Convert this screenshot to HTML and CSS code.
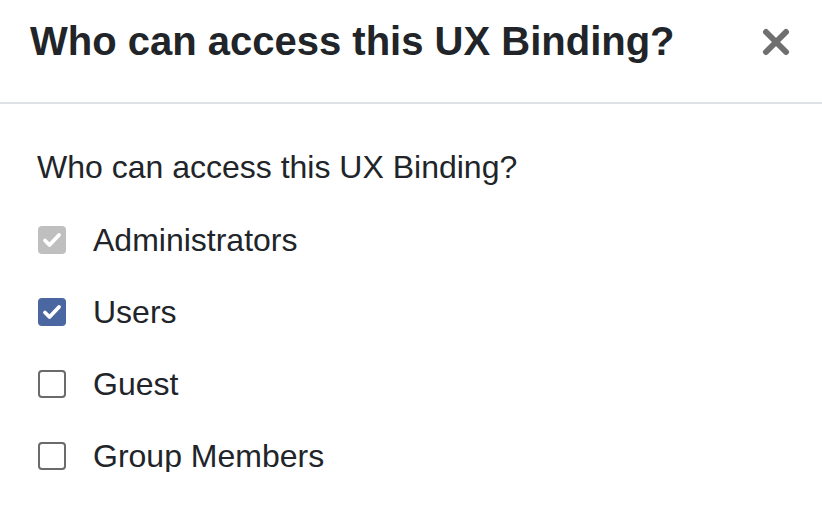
FILE: index.html
```html
<!DOCTYPE html>
<html>
<head>
<meta charset="utf-8">
<link rel="stylesheet" href="styles.css">
</head>
<body>
<div class="modal">
  <div class="modal-header">
    <h1 class="modal-title">Who can access this UX Binding?</h1>
    <button class="close" aria-label="Close">
      <svg width="28" height="28" viewBox="0 0 28 28"><path d="M4 4 L24 24 M24 4 L4 24" stroke="#6f6f6f" stroke-width="6" stroke-linecap="round"/></svg>
    </button>
  </div>
  <div class="modal-body">
    <p class="question">Who can access this UX Binding?</p>
    <ul class="options">
      <li class="option"><span class="box disabled"><svg viewBox="0 0 28 28" width="28" height="28"><path d="M7 14.5 L11.5 19 L21 9" fill="none" stroke="#fff" stroke-width="3.8" stroke-linecap="round" stroke-linejoin="round"/></svg></span><span class="label">Administrators</span></li>
      <li class="option"><span class="box checked"><svg viewBox="0 0 28 28" width="28" height="28"><path d="M7 14.5 L11.5 19 L21 9" fill="none" stroke="#fff" stroke-width="3.8" stroke-linecap="round" stroke-linejoin="round"/></svg></span><span class="label">Users</span></li>
      <li class="option"><span class="box"></span><span class="label">Guest</span></li>
      <li class="option"><span class="box"></span><span class="label">Group Members</span></li>
    </ul>
  </div>
</div>
</body>
</html>
```
FILE: styles.css
```css
html, body {
  margin: 0;
  padding: 0;
  background: #fff;
}
body {
  font-family: "Liberation Sans", Arial, sans-serif;
  color: #212529;
}
.modal {
  width: 822px;
}
.modal-header {
  display: flex;
  align-items: flex-start;
  justify-content: space-between;
  height: 104px;
  padding: 21px 32px 0 30px;
  box-sizing: border-box;
  border-bottom: 2px solid #dee2e6;
}
.modal-title {
  margin: 0;
  font-size: 40px;
  font-weight: bold;
  line-height: 40px;
}
.close {
  border: 0;
  background: none;
  padding: 0;
  width: 28px;
  height: 28px;
  margin-top: 7px;
}
.close svg {
  display: block;
}
.modal-body {
  padding: 0 37px;
}
.question {
  margin: 0;
  padding-top: 47px;
  font-size: 32px;
  line-height: 32px;
}
.options {
  list-style: none;
  margin: 0;
  padding: 41px 0 0 1px;
  display: flex;
  flex-direction: column;
  gap: 40px;
}
.option {
  display: flex;
  align-items: center;
  height: 32px;
}
.box {
  width: 28px;
  height: 28px;
  box-sizing: border-box;
  border-radius: 4px;
  border: 2.5px solid #6b6b6b;
  background: #fff;
  margin-right: 27px;
  flex: none;
  position: relative;
}
.box svg {
  position: absolute;
  left: -2.5px;
  top: -2.5px;
}
.box.checked {
  background: #4a67a1;
  border-color: #4a67a1;
}
.box.disabled {
  background: #bfbfbf;
  border-color: #bfbfbf;
}
.label {
  font-size: 32px;
  line-height: 32px;
}
```
